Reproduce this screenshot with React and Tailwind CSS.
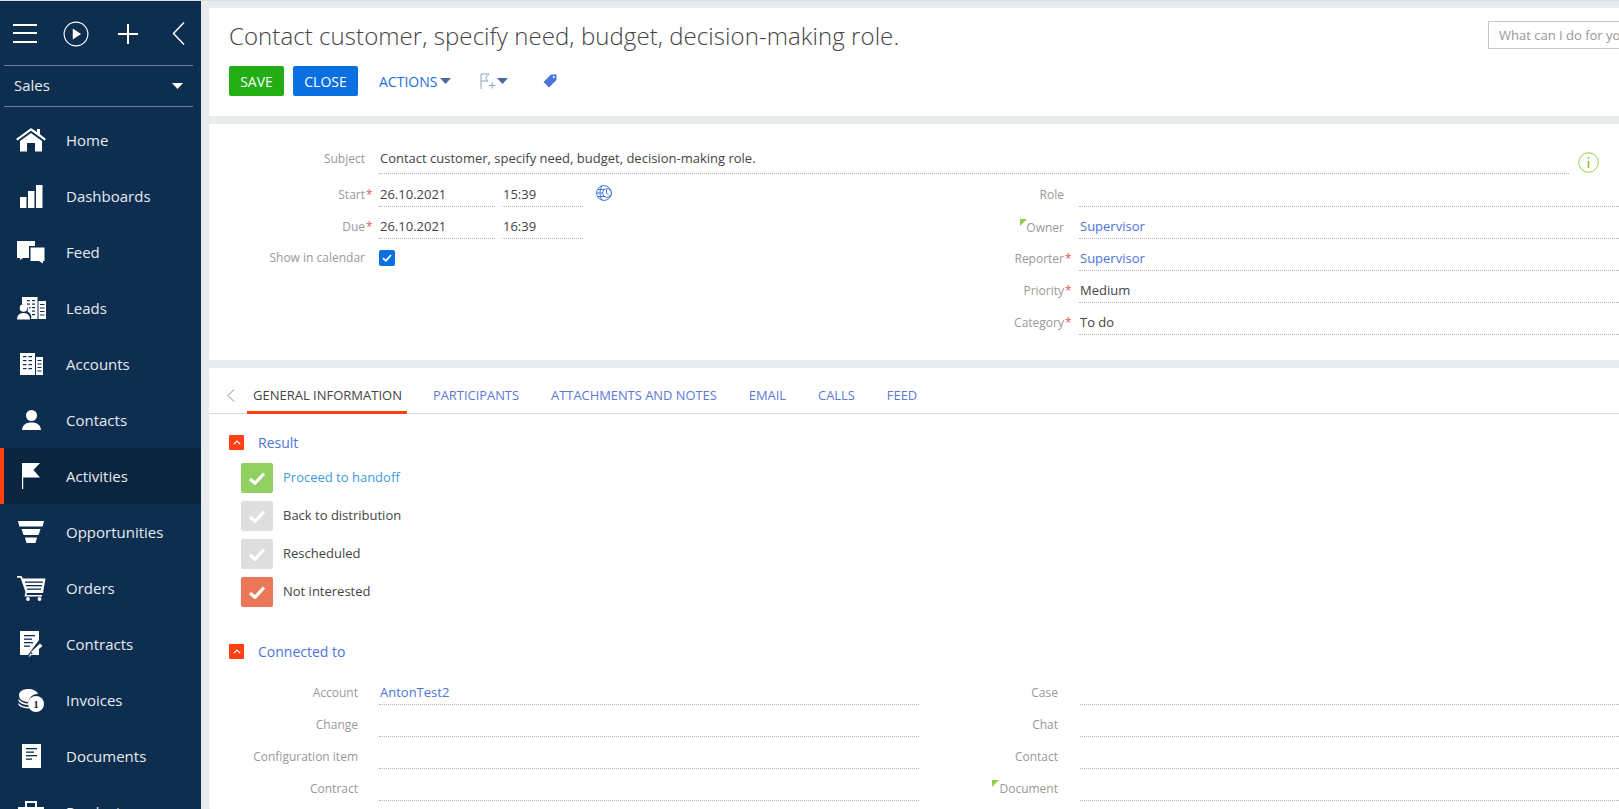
import React from "react";

const font = { fontFamily: '"Open Sans", sans-serif' };

const icons = {
  home: (
    <svg width="30" height="24" viewBox="0 0 30 24" fill="white">
      <path d="M15 0 L21 4 V1 H24 V6.2 L30 11 L28.6 12.6 L15 2.8 L1.4 12.6 L0 11 Z" />
      <path d="M15 5 L26 13 V23.5 H19 V15 H11 V23.5 H4 V13 Z" />
    </svg>
  ),
  dashboards: (
    <svg width="23" height="23" viewBox="0 0 23 23" fill="white">
      <rect x="0" y="12" width="6.5" height="11" />
      <rect x="8" y="6" width="6.5" height="17" />
      <rect x="16" y="0" width="6.5" height="23" />
    </svg>
  ),
  feed: (
    <svg width="28" height="23" viewBox="0 0 28 23" fill="white">
      <path d="M0 0 H18 V5 H12 V17 H6 L3 19 V17 H0 Z" />
      <path d="M13.5 6.5 H27.5 V20 H26 V22.5 L22 20 H13.5 Z" />
    </svg>
  ),
  leads: (
    <svg width="29" height="23" viewBox="0 0 29 23" fill="white">
      <path d="M5 0 H20.5 V22 H14 A6 6 0 0 0 10.5 14.5 A5 5 0 0 0 5 7.5 Z" />
      <rect x="21.5" y="4" width="7.5" height="18" />
      <circle cx="6.5" cy="11" r="3.8" />
      <path d="M0 22.5 C0 18 3 16 6.5 16 C10 16 13 18 13 22.5 Z" />
      <g fill="#0e2e50">
        <rect x="10" y="3" width="3" height="1.2" /><rect x="15" y="3" width="3" height="1.2" />
        <rect x="10" y="6.5" width="3" height="1.2" /><rect x="15" y="6.5" width="3" height="1.2" />
        <rect x="12" y="10" width="1.5" height="1.2" /><rect x="15" y="10" width="3" height="1.2" />
        <rect x="15" y="13.5" width="3" height="1.2" /><rect x="15" y="17" width="3" height="1.2" />
        <rect x="23" y="7" width="4.5" height="1" /><rect x="23" y="10.5" width="4.5" height="1" />
        <rect x="23" y="14" width="4.5" height="1" /><rect x="23" y="17.5" width="4.5" height="1" />
      </g>
    </svg>
  ),
  accounts: (
    <svg width="23" height="22" viewBox="0 0 23 22" fill="white">
      <rect x="0" y="0" width="15" height="22" />
      <rect x="16" y="4" width="7" height="18" />
      <g fill="#0e2e50">
        <rect x="3" y="3" width="3.5" height="1.2" /><rect x="8.5" y="3" width="3.5" height="1.2" />
        <rect x="3" y="7" width="3.5" height="1.2" /><rect x="8.5" y="7" width="3.5" height="1.2" />
        <rect x="3" y="11" width="3.5" height="1.2" /><rect x="8.5" y="11" width="3.5" height="1.2" />
        <rect x="3" y="15" width="3.5" height="1.2" /><rect x="8.5" y="15" width="3.5" height="1.2" />
        <rect x="17.5" y="7" width="4" height="1" /><rect x="17.5" y="10.5" width="4" height="1" />
        <rect x="17.5" y="14" width="4" height="1" /><rect x="17.5" y="17.5" width="4" height="1" />
      </g>
    </svg>
  ),
  contacts: (
    <svg width="19" height="20" viewBox="0 0 19 20" fill="white">
      <circle cx="9.5" cy="5.5" r="5.5" />
      <path d="M0 20 C0.5 15 3.5 12.5 9.5 12.5 C15.5 12.5 18.5 15 19 20 Z" />
    </svg>
  ),
  activities: (
    <svg width="18" height="26" viewBox="0 0 18 26" fill="white">
      <rect x="0" y="0" width="1.2" height="26" />
      <path d="M1 0 H18 L11.5 7 L18 14.5 H1 Z" />
    </svg>
  ),
  opportunities: (
    <svg width="26" height="22" viewBox="0 0 26 22" fill="white">
      <path d="M0 0 H26 L24.6 5.5 H1.4 Z" />
      <path d="M3.5 8 H22.5 L20.5 14 H5.5 Z" />
      <path d="M7 16.5 H19 L17.5 22 H8.5 Z" />
    </svg>
  ),
  orders: (
    <svg width="29" height="25" viewBox="0 0 29 25" fill="white">
      <path d="M0 0 H4.5 L6 2.5 H28.5 L26 17 H10 L9.5 19 H25 V20.5 H7.5 L8.5 16 L3.5 1.8 H0 Z" />
      <g fill="#0e2e50">
        <rect x="8" y="5.5" width="18" height="1.3" /><rect x="9" y="9" width="16" height="1.3" />
        <rect x="10" y="12.5" width="14" height="1.3" />
      </g>
      <circle cx="11" cy="23" r="1.9" /><circle cx="22.5" cy="23" r="1.9" />
    </svg>
  ),
  contracts: (
    <svg width="23" height="27" viewBox="0 0 23 27" fill="white">
      <rect width="19" height="24" />
      <g fill="#0e2e50">
        <rect x="4" y="4" width="11" height="1.3" /><rect x="4" y="7.5" width="8" height="1.3" />
        <rect x="4" y="11" width="9" height="1.3" /><rect x="4" y="14.5" width="6" height="1.3" />
      </g>
      <path d="M23 13 L8 27 V24 L19 9 Z" fill="#0e2e50" />
      <path d="M20 12.5 L22.5 15 L13 23 L11 21 Z" />
      <path d="M10.5 22 L12 23.5 L8.5 26.5 Z" />
    </svg>
  ),
  invoices: (
    <svg width="26" height="23" viewBox="0 0 26 23" fill="white">
      <path d="M1 6 C1 2 6 0 10 0 C15 0 19 2 20 5 A9 9 0 0 0 10.5 13 C6 13 1 11 1 6 Z" />
      <path d="M0.5 10 C3 13 7 14.5 10.2 14.5 L10 16 C6 16 2.5 14.5 0.5 12 Z" />
      <path d="M0.5 14 C3 17 7 18 10.5 18 L11.5 19.5 C6 19.5 2.5 18 0.5 16 Z" />
      <circle cx="18" cy="15" r="8" />
      <text x="18" y="19" textAnchor="middle" fontSize="11" fontWeight="700" fill="#0e2e50" fontFamily="Liberation Serif, serif">1</text>
    </svg>
  ),
  documents: (
    <svg width="19" height="24" viewBox="0 0 19 24" fill="white">
      <rect width="19" height="24" />
      <g fill="#0e2e50">
        <rect x="4" y="4" width="11" height="1.3" /><rect x="4" y="7.5" width="8" height="1.3" />
        <rect x="4" y="11" width="11" height="1.3" /><rect x="4" y="14.5" width="6" height="1.3" />
      </g>
    </svg>
  ),
  products: (
    <svg width="26" height="22" viewBox="0 0 26 22" fill="white">
      <path d="M7 6 V0 H19 V6 H17 V2 H9 V6 Z" />
      <rect x="0" y="6" width="26" height="16" />
    </svg>
  ),
};

const navItems = [
  ["Home", "home"],
  ["Dashboards", "dashboards"],
  ["Feed", "feed"],
  ["Leads", "leads"],
  ["Accounts", "accounts"],
  ["Contacts", "contacts"],
  ["Activities", "activities", true],
  ["Opportunities", "opportunities"],
  ["Orders", "orders"],
  ["Contracts", "contracts"],
  ["Invoices", "invoices"],
  ["Documents", "documents"],
  ["Products", "products"],
];

function Caret({ color = "#4d6a9c" }) {
  return (
    <svg width="11" height="6" viewBox="0 0 11 6" fill={color} className="shrink-0">
      <path d="M0 0 H11 L5.5 6 Z" />
    </svg>
  );
}

function Sidebar() {
  return (
    <aside className="w-[201px] shrink-0 bg-[#0e2e50] h-full overflow-hidden">
      <div className="h-[64px] flex items-center pl-[13px] pt-[1px]">
        <svg width="24" height="19" viewBox="0 0 24 19" fill="white" className="shrink-0">
          <rect y="0" width="24" height="2" /><rect y="8" width="24" height="2" /><rect y="17" width="24" height="2" />
        </svg>
        <svg width="26" height="26" viewBox="0 0 28 28" fill="none" className="ml-[26px] shrink-0">
          <circle cx="14" cy="14" r="12.8" stroke="white" strokeWidth="1.2" />
          <path d="M10.5 8 L19.5 14 L10.5 20 Z" fill="white" />
        </svg>
        <svg width="20" height="20" viewBox="0 0 20 20" fill="white" className="ml-[29px] shrink-0">
          <rect x="9" width="2" height="20" /><rect y="9" width="20" height="2" />
        </svg>
        <svg width="13" height="23" viewBox="0 0 13 23" fill="none" className="ml-[34px] shrink-0">
          <path d="M12 0.5 L1.5 11.5 L12 22.5" stroke="white" strokeWidth="1.5" />
        </svg>
      </div>
      <div className="mx-[4px] w-[189px] h-[42px] border-y border-[#6b7f96] flex items-center justify-between pl-[10px] pr-[10px] pb-[2px]">
        <span className="text-[15px] text-[#e6ebf0]" style={font}>Sales</span>
        <div className="mt-[2px]"><Caret color="white" /></div>
      </div>
      <nav className="mt-[5px]">
        {navItems.map(([label, icon, active]) => (
          <div
            key={label}
            className={
              active
                ? "h-[56px] flex items-center border-l-4 border-[#ff4013] bg-[#0b2540]"
                : "h-[56px] flex items-center border-l-4 border-transparent"
            }
          >
            <div className="w-[54px] flex justify-center">{icons[icon]}</div>
            <span className="ml-[8px] text-[15px] text-[#e6ebf0]" style={font}>{label}</span>
          </div>
        ))}
      </nav>
    </aside>
  );
}

function Label({ text, required, corner, shift, width }) {
  return (
    <div className={width + (shift ? " top-[1px]" : "") + " shrink-0 relative text-right text-[12px] leading-[20px] text-[#999]"}>
      {corner && (
        <span className={corner + " absolute top-[1px] w-0 h-0 border-t-[7px] border-t-[#8fd146] border-r-[7px] border-r-transparent"} />
      )}
      {text}
      {required && <span className="absolute text-[#f0574a] ml-[1px]">*</span>}
    </div>
  );
}

function Value({ text, color = "text-[#444]", className, height = "h-[23px]" }) {
  return (
    <div className={className + " " + height + " border-b border-dotted border-[#b5b5b5] text-[13px] leading-[20px] pl-[1px] truncate " + color}>
      {text}
    </div>
  );
}

function Field({ label, required, corner, shift, value, link, labelW, gap, rowClass = "h-[32px]" }) {
  return (
    <div className={rowClass + " flex items-end"}>
      <div className="self-end mb-[2px]">
        <Label text={label} required={required} corner={corner} shift={shift} width={labelW} />
      </div>
      <Value text={value} color={link ? "text-[#4b74d9]" : "text-[#444]"} className={gap + " flex-1"} />
    </div>
  );
}

function SectionHead({ title, className }) {
  return (
    <div className={className + " flex items-center"}>
      <div className="w-[15px] h-[15px] bg-[#ff4013] rounded-[1px] flex items-center justify-center">
        <svg width="8" height="5" viewBox="0 0 8 5" fill="none">
          <path d="M0.8 4.2 L4 1 L7.2 4.2" stroke="white" strokeWidth="1.2" />
        </svg>
      </div>
      <span className="ml-[14px] text-[14px] text-[#4b74d9]">{title}</span>
    </div>
  );
}

function ResultItem({ bg, text, color }) {
  return (
    <div className="h-[30px] flex items-center mb-[8px]">
      <div className={bg + " w-[32px] h-[30px] rounded-[2px] flex items-center justify-center"}>
        <svg width="16" height="13" viewBox="0 0 16 13" fill="none">
          <path d="M1 7 L6 11.3 L15 1.5" stroke="white" strokeWidth="3.2" />
        </svg>
      </div>
      <span className={color + " ml-[10px] text-[13px]"}>{text}</span>
    </div>
  );
}

const tabs = [
  ["PARTICIPANTS", "ml-[26px]"],
  ["ATTACHMENTS AND NOTES", "ml-[32px]"],
  ["EMAIL", "ml-[32px]"],
  ["CALLS", "ml-[32px]"],
  ["FEED", "ml-[32px]"],
];

const connectedLeft = [["Account", "AntonTest2"], ["Change"], ["Configuration item"], ["Contract"]];
const connectedRight = [["Case"], ["Chat"], ["Contact"], ["Document", null, "right-[59px]"]];

export default function App() {
  return (
    <div className="h-[809px] w-full overflow-hidden flex border-t border-[#dde0e0] bg-[#e8ecec]" style={font}>
      <Sidebar />
      <main className="flex-1 min-w-0 pl-[8px] pt-[7px] flex flex-col gap-[8px]">
        <section className="h-[108px] shrink-0 bg-white rounded-l-[2px] pl-[20px] pt-[10px] overflow-hidden">
          <div className="flex justify-between items-start">
            <h1 className="text-[24px] leading-[36px] font-light tracking-[0.07px] text-[#444] whitespace-nowrap">
              Contact customer, specify need, budget, decision-making role.
            </h1>
            <input
              placeholder="What can I do for you?"
              className="shrink-0 w-[220px] -mr-[89px] mt-[3px] h-[28px] border border-[#c8c8c8] pl-[10px] text-[13px] placeholder:text-[#999] outline-none"
            />
          </div>
          <div className="flex items-center mt-[12px]">
            <button className="w-[55px] h-[30px] bg-[#22ad14] rounded-[2px] text-white text-[14px]">SAVE</button>
            <button className="ml-[9px] w-[65px] h-[30px] bg-[#0a6fe0] rounded-[2px] text-white text-[14px]">CLOSE</button>
            <div className="ml-[21px] flex items-center gap-[3px] text-[14px] text-[#1a6fd8]">
              ACTIONS <Caret />
            </div>
            <div className="ml-[29px] flex items-center gap-[1px]">
              <svg width="16" height="16" viewBox="0 0 16 16" fill="none" stroke="#8fa3bf" strokeWidth="1">
                <path d="M1 16 V1 H9 L5.5 5 L8 8 H1" />
                <path d="M9 12.5 H15.5 M12.2 9.5 V15.5" />
              </svg>
              <Caret />
            </div>
            <svg width="14" height="14" viewBox="0 0 14 14" fill="#4b74d9" className="ml-[35px]">
              <path d="M8 0.5 H13.5 V6 L6 13.5 L0.5 8 Z M10.8 2 A1 1 0 1 0 10.81 2 Z" fillRule="evenodd" />
            </svg>
          </div>
        </section>

        <section className="h-[236px] shrink-0 bg-white rounded-l-[2px] pt-[18px] overflow-hidden">
          <div className="flex pl-[20px]">
            <div className="w-[1340px] shrink-0 h-[32px] flex items-end">
              <div className="self-start mt-[7px]">
                <Label text="Subject" width="w-[136px]" />
              </div>
              <Value height="h-[26px]" text="Contact customer, specify need, budget, decision-making role." className="ml-[14px] flex-1" />
            </div>
            <svg width="21" height="21" viewBox="0 0 21 21" fill="none" className="ml-[9px] mt-[10px] shrink-0">
              <circle cx="10.5" cy="10.5" r="9.8" stroke="#8fd146" strokeWidth="1" />
              <path d="M10.5 5 V6.8 M10.5 9 V16" stroke="#6fbf2a" strokeWidth="1.4" />
            </svg>
          </div>
          <div className="flex">
            <div className="w-[751px] shrink-0 pl-[20px]">
              <div className="h-[33px] flex items-end">
                <div className="mb-[2px]"><Label text="Start" required width="w-[136px]" /></div>
                <Value text="26.10.2021" className="ml-[14px] w-[116px]" />
                <Value text="15:39" className="ml-[7px] w-[81px]" />
                <svg width="16" height="16" viewBox="0 0 16 16" fill="none" stroke="#3f78dc" strokeWidth="1" className="ml-[13px] mb-[6px]">
                  <circle cx="8" cy="8" r="7.4" />
                  <path d="M0.6 8 H8 M6 0.8 C3.4 4 3.4 12 6 15.2 M1.8 4.5 H8 M1.8 11.5 H8" />
                  <circle cx="11" cy="8" r="4.4" fill="white" />
                  <path d="M10.5 4.5 V8 L13 10.5" />
                </svg>
              </div>
              <div className="h-[32px] flex items-end">
                <div className="mb-[2px]"><Label text="Due" required width="w-[136px]" /></div>
                <Value text="26.10.2021" className="ml-[14px] w-[116px]" />
                <Value text="16:39" className="ml-[7px] w-[81px]" />
              </div>
              <div className="h-[32px] mt-[3px] flex items-center">
                <Label text="Show in calendar" width="w-[136px]" />
                <div className="ml-[14px] w-[16px] h-[16px] bg-[#0a6fe0] rounded-[2px] flex items-center justify-center">
                  <svg width="10" height="8" viewBox="0 0 10 8" fill="none">
                    <path d="M1 4.2 L3.8 6.8 L9 1" stroke="white" strokeWidth="1.8" />
                  </svg>
                </div>
              </div>
            </div>
            <div className="flex-1">
              <Field rowClass="h-[33px]" label="Role" labelW="w-[104px]" gap="ml-[15px]" />
              <Field label="Owner" corner="right-[37px]" shift value="Supervisor" link labelW="w-[104px]" gap="ml-[15px]" />
              <Field label="Reporter" required value="Supervisor" link labelW="w-[104px]" gap="ml-[15px]" />
              <Field label="Priority" required value="Medium" labelW="w-[104px]" gap="ml-[15px]" />
              <Field label="Category" required value="To do" labelW="w-[104px]" gap="ml-[15px]" />
            </div>
          </div>
        </section>

        <section className="flex-1 min-h-0 bg-white rounded-l-[2px] overflow-hidden">
          <div className="h-[46px] border-b border-[#dcdcdc] flex items-end pl-[20px]">
            <svg width="8" height="13" viewBox="0 0 8 13" fill="none" className="mb-[11px] ml-[-2px]">
              <path d="M7 0.5 L1 6.5 L7 12.5" stroke="#888" strokeWidth="1" />
            </svg>
            <div className="ml-[12px] h-[46px] pl-[6px] pr-[5px] flex items-center pt-[12px] border-b-[3px] border-[#ff4013] -mb-px text-[13px] text-[#444]">
              GENERAL INFORMATION
            </div>
            {tabs.map(([t, ml]) => (
              <div key={t} className={ml + " h-[46px] flex items-center pt-[12px] text-[12.9px] text-[#5b78d6]"}>{t}</div>
            ))}
          </div>
          <div className="pl-[20px]">
            <SectionHead title="Result" className="mt-[18px]" />
            <div className="ml-[12px] mt-[10px]">
              <ResultItem bg="bg-[#91d061]" text="Proceed to handoff" color="text-[#3b9ce0]" />
              <ResultItem bg="bg-[#dedede]" text="Back to distribution" color="text-[#444]" />
              <ResultItem bg="bg-[#dedede]" text="Rescheduled" color="text-[#444]" />
              <ResultItem bg="bg-[#ea7858]" text="Not interested" color="text-[#444]" />
            </div>
            <SectionHead title="Connected to" className="mt-[34px]" />
            <div className="flex mt-[11px]">
              <div className="w-[690px] shrink-0">
                {connectedLeft.map(([l, v]) => (
                  <Field key={l} label={l} value={v} link labelW="w-[129px]" gap="ml-[21px]" />
                ))}
              </div>
              <div className="flex-1">
                {connectedRight.map(([l, v, c]) => (
                  <Field key={l} label={l} value={v} corner={c} labelW="w-[139px]" gap="ml-[22px]" />
                ))}
              </div>
            </div>
          </div>
        </section>
      </main>
    </div>
  );
}
